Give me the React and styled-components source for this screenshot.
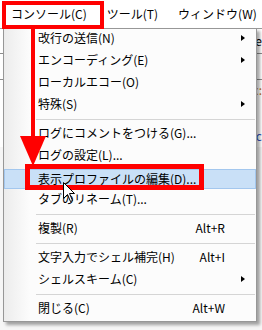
import React from 'react';
import styled, { createGlobalStyle } from 'styled-components';

const GlobalStyle = createGlobalStyle`
  html, body {
    margin: 0;
    padding: 0;
    background: #ffffff;
  }
  body {
    font-family: "Noto Sans CJK JP", "Noto Sans", sans-serif;
  }
`;

const menuItems = [
  { label: '改行の送信(N)', sub: true },
  { label: 'エンコーディング(E)', sub: true },
  { label: 'ローカルエコー(O)' },
  { label: '特殊(S)', sub: true },
  { sep: true },
  { label: 'ログにコメントをつける(G)...' },
  { label: 'ログの設定(L)...' },
  { label: '表示プロファイルの編集(D)...', active: true },
  { label: 'タブのリネーム(T)...' },
  { sep: true },
  { label: '複製(R)', key: 'Alt+R' },
  { sep: true },
  { label: '文字入力でシェル補完(H)', key: 'Alt+I' },
  { label: 'シェルスキーム(C)', sub: true },
  { sep: true },
  { label: '閉じる(C)', key: 'Alt+W' },
];

const Screen = styled.div`
  position: relative;
  width: 262px;
  height: 330px;
  overflow: hidden;
  background: #ffffff;
  font-size: 12px;
  color: #000000;
`;

const MenuBar = styled.div`
  display: flex;
  align-items: center;
  height: 28px;
  padding-left: 1px;
  background: #ffffff;
  white-space: nowrap;
`;

const MenuTitle = styled.div`
  padding: 0 10px;
  line-height: 16px;
`;

/* the terminal window behind the open menu, only its edges show */
const Workspace = styled.div`
  display: flex;
  flex-direction: column;
  height: 302px;
  background: #f6f6f6;
  border-top: 1px solid #9a9a9a;
  box-sizing: border-box;
`;

const Pane = styled.div`
  display: flex;
  align-items: center;
  justify-content: flex-end;
  height: ${(p) => p.$h}px;
  border-bottom: 1px solid ${(p) => (p.$line ? '#8c8c8c' : 'transparent')};
  background: #ffffff;
  white-space: nowrap;
  color: ${(p) => p.$color || '#000'};
  line-height: 14px;
`;

const Dropdown = styled.div`
  position: absolute;
  left: 3px;
  top: 28px;
  width: 254px;
  height: 294px;
  box-sizing: border-box;
  border: 1px solid #979797;
  background: linear-gradient(90deg, #ececec 0px, #fcfcfc 26px, #fcfcfc 100%);
  box-shadow: 3px 3px 3px rgba(0, 0, 0, 0.35);
`;

const Item = styled.div`
  display: grid;
  grid-template-columns: 1fr auto 31px;
  align-items: center;
  height: 22px;
  box-sizing: border-box;
  padding: 0 0 5px 34px;
  line-height: 16px;
  white-space: nowrap;
  ${(p) =>
    p.$active &&
    `
    height: 20px;
    margin: 1px 0;
    padding: 0 0 1px 33px;
    background: #c9e0f7;
    border: 1px solid #a3c7ee;
  `}
`;

const Shortcut = styled.span`
  text-align: right;
`;

const SubArrow = styled.span`
  display: block;
  width: 0;
  height: 0;
  margin-left: 16px;
  border-left: 4px solid #000000;
  border-top: 3.5px solid transparent;
  border-bottom: 3.5px solid transparent;
`;

const Separator = styled.div`
  height: 7px;
  box-sizing: border-box;
  padding: 2px 1px 0 32px;

  &::after {
    content: '';
    display: block;
    height: 1px;
    background: #d5d5d5;
  }
`;

const RedBox = styled.div`
  position: absolute;
  left: ${(p) => p.$x}px;
  top: ${(p) => p.$y}px;
  width: ${(p) => p.$w}px;
  height: ${(p) => p.$h}px;
  box-sizing: border-box;
  border: ${(p) => p.$b}px solid #ff0000;
`;

const ArrowSvg = styled.svg`
  position: absolute;
  left: 18px;
  top: 28px;
`;

const CursorSvg = styled.svg`
  position: absolute;
  left: 63px;
  top: 182px;
`;

export default function App() {
  return (
    <Screen>
      <GlobalStyle />
      <MenuBar>
        <MenuTitle>コンソール(C)</MenuTitle>
        <MenuTitle>ツール(T)</MenuTitle>
        <MenuTitle>ウィンドウ(W)</MenuTitle>
      </MenuBar>

      <Workspace>
        <Pane $h={24} $line>de</Pane>
        <Pane $h={25} $line />
        <Pane $h={20} $color="#c07020">c:</Pane>
        <Pane $h={24} />
        <Pane $h={20} $color="#3050c0">sc</Pane>
      </Workspace>

      <Dropdown>
        {menuItems.map((it, i) =>
          it.sep ? (
            <Separator key={i} />
          ) : (
            <Item key={i} $active={it.active}>
              <span>{it.label}</span>
              <Shortcut>{it.key || ''}</Shortcut>
              {it.sub ? <SubArrow /> : <span />}
            </Item>
          )
        )}
      </Dropdown>

      <RedBox $x={2} $y={1} $w={102} $h={28} $b={4} />
      <ArrowSvg width="30" height="140" viewBox="0 0 30 140">
        <rect x="13" y="0" width="4" height="110" fill="#ff0000" />
        <polygon points="2,108 28,108 15,138" fill="#ff0000" />
      </ArrowSvg>
      <RedBox $x={25} $y={164} $w={179} $h={26} $b={5} />

      <CursorSvg width="13" height="21" viewBox="0 0 13 21">
        <path
          d="M0.5 0.5 L0.5 16.5 L4.5 12.5 L7.5 19.5 L9.5 18.5 L6.5 11.5 L11.5 11.5 Z"
          fill="#ffffff"
          stroke="#000000"
          strokeWidth="1"
        />
      </CursorSvg>
    </Screen>
  );
}
